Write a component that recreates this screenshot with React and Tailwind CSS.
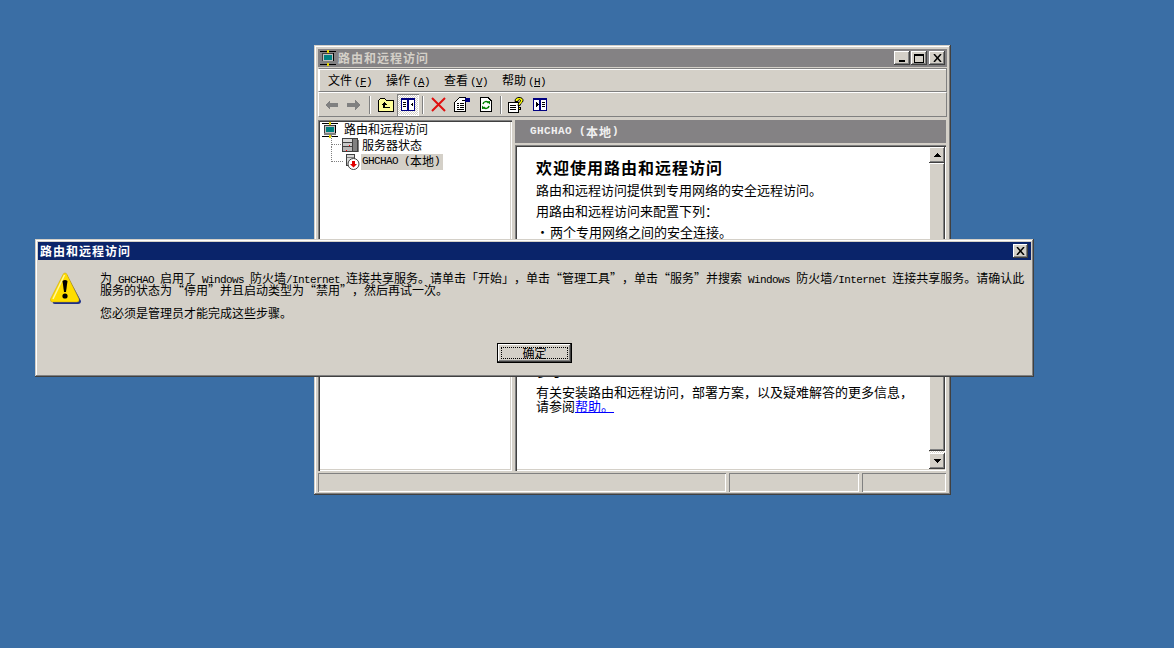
const cjk =
  "font-['Noto_Sans_CJK_SC','Liberation_Sans',sans-serif] [text-spacing-trim:space-all]";
const raised =
  "shadow-[inset_-1px_-1px_0_#404040,inset_1px_1px_0_#d4d0c8,inset_-2px_-2px_0_#808080,inset_2px_2px_0_#ffffff]";
const buttonRaised =
  "shadow-[inset_-1px_-1px_0_#404040,inset_1px_1px_0_#ffffff,inset_-2px_-2px_0_#808080]";
const sunken =
  "shadow-[inset_1px_1px_0_#808080,inset_2px_2px_0_#404040,inset_-1px_-1px_0_#ffffff,inset_-2px_-2px_0_#d4d0c8]";
const statusCell = "shadow-[inset_1px_1px_0_#808080,inset_-1px_-1px_0_#ffffff]";

// latin text in the bitmap font is 6px per glyph
const Latin = ({ children, className = "" }) => (
  <span className={`font-['Liberation_Mono',monospace] text-[11px] tracking-[-0.6px] whitespace-pre ${className}`}>
    {children}
  </span>
);

const NetworkIcon = () => (
  <svg width="16" height="16" viewBox="0 0 16 16" shapeRendering="crispEdges" className="shrink-0">
    <rect x="0" y="1" width="16" height="1" fill="#000" />
    <rect x="7" y="0" width="2" height="3" fill="#e8d800" />
    <rect x="3" y="3" width="10" height="8" fill="#c0c0c0" />
    <rect x="3" y="3" width="10" height="1" fill="#404040" />
    <rect x="2" y="3" width="1" height="8" fill="#404040" />
    <rect x="13" y="3" width="1" height="8" fill="#000" />
    <rect x="4" y="5" width="8" height="5" fill="#008080" />
    <rect x="2" y="11" width="12" height="2" fill="#808080" />
    <rect x="0" y="14" width="16" height="1" fill="#000" />
    <rect x="7" y="13" width="2" height="3" fill="#e8d800" />
  </svg>
);

const ServerIcon = () => (
  <svg width="17" height="16" viewBox="0 0 17 16" shapeRendering="crispEdges" className="shrink-0">
    <rect x="0.500" y="1.500" width="15" height="4" fill="#d8d8d8" stroke="#404040" />
    <rect x="0.500" y="5.500" width="15" height="4" fill="#c8c8c8" stroke="#404040" />
    <rect x="0.500" y="9.500" width="15" height="5" fill="#b8b8b8" stroke="#404040" />
    <rect x="10" y="2" width="5" height="12" fill="#808080" />
    <rect x="10" y="1" width="1" height="14" fill="#404040" />
    <rect x="16" y="3" width="1" height="12" fill="#808080" />
    <rect x="4" y="13" width="1" height="1" fill="#ff0000" />
    <rect x="7" y="8" width="1" height="1" fill="#ff0000" />
  </svg>
);

const StoppedServerIcon = () => (
  <svg width="15" height="16" viewBox="0 0 15 16" className="shrink-0">
    <rect x="1.500" y="0.500" width="8" height="11" fill="#d8d8d8" stroke="#404040" shapeRendering="crispEdges" />
    <rect x="2" y="3" width="7" height="1" fill="#808080" shapeRendering="crispEdges" />
    <circle cx="8.500" cy="10" r="5.500" fill="#ffffff" stroke="#404040" />
    <path d="M7 7h3v3h2l-3.500 3.500-3.500-3.500h2z" fill="#e00000" />
  </svg>
);

const UpFolderIcon = () => (
  <svg width="16" height="14" viewBox="0 0 16 14" shapeRendering="crispEdges">
    <path d="M0.500 13.500V2.500L2.500 0.500H6.500L8.500 2.500H15.500V13.500Z" fill="#ffff99" stroke="#000" />
    <path d="M6 4L3 7H5V10H12V8.500H7V7H9Z" fill="#000" />
  </svg>
);

const PanelIcon = ({ flip }) => (
  <svg width="14" height="13" viewBox="0 0 14 13" shapeRendering="crispEdges">
    <rect x="0.500" y="0.500" width="13" height="12" fill="#fff" stroke="#000080" />
    <rect x="0" y="0" width="14" height="2" fill="#000080" />
    <rect x="6" y="0" width="2" height="13" fill="#000080" />
    {flip ? (
      <path d="M3 4V9L5.500 6.500Z M9 4H12V5H9Z M9 6H12V7H9Z M9 8H12V9H9Z" fill="#000" />
    ) : (
      <path d="M2 4H5V5H2Z M2 6H5V7H2Z M2 8H5V9H2Z M12 4L9.500 6.500L12 9Z" fill="#000" />
    )}
  </svg>
);

const ArrowIcon = ({ left }) => (
  <svg width="14" height="12" viewBox="0 0 14 12" shapeRendering="crispEdges">
    <path d={left ? "M6 1V4H14V8H6V11L1 6Z" : "M8 1V4H0V8H8V11L13 6Z"} fill="#808080" />
  </svg>
);

const DeleteIcon = () => (
  <svg width="15" height="15" viewBox="0 0 15 15">
    <path d="M1 1L14 14M14 1L1 14" stroke="#e01010" strokeWidth="2" fill="none" />
  </svg>
);

const PropertiesIcon = () => (
  <svg width="17" height="15" viewBox="0 0 17 15" shapeRendering="crispEdges">
    <path d="M0.500 5.500L5.500 0.500H11.500V14.500H0.500Z" fill="#fff" stroke="#000" />
    <path d="M3 6H5V7H3ZM6 6H10V7H6ZM3 8H5V9H3ZM6 8H10V9H6ZM3 10H5V11H3ZM6 10H10V11H6ZM3 12H10V13H3Z" fill="#000" />
    <rect x="11" y="1" width="5" height="4" fill="#000080" />
    <rect x="8" y="3" width="3" height="1" fill="#000" />
  </svg>
);

const RefreshIcon = () => (
  <svg width="12" height="15" viewBox="0 0 12 15">
    <path d="M0.500 0.500H8L11.500 4V14.500H0.500Z" fill="#fff" stroke="#000" shapeRendering="crispEdges" />
    <path d="M3 7A3 3 0 0 1 8.500 6M9 9A3 3 0 0 1 3.500 10" stroke="#008000" strokeWidth="1.500" fill="none" />
    <path d="M7 4.500L10 4V7.500Z M5 11.500L2 12V8.500Z" fill="#008000" />
  </svg>
);

const HelpIcon = () => (
  <svg width="16" height="16" viewBox="0 0 16 16" shapeRendering="crispEdges">
    <path d="M0.500 5.500H10.500V15.500H0.500Z" fill="#fff" stroke="#000" />
    <path d="M2 8H8V9H2ZM2 10H8V11H2ZM2 12H8V13H2Z" fill="#000" />
    <path
      d="M7 4.500C7 1.500 9 0.500 11 0.500C14 0.500 15 2 15 3.500C15 6 12 6 12 8.500H10C10 5.500 12.500 5 12.500 3.500C12.500 2.500 11 2.500 10.500 3C10 3.500 10 4 10 4.500Z"
      fill="#ffff00"
      stroke="#000"
      shapeRendering="auto"
    />
    <rect x="10" y="10" width="2.500" height="2.500" fill="#ffff00" stroke="#000" />
  </svg>
);

const WarningIcon = () => (
  <svg width="32" height="32" viewBox="0 0 32 32">
    <path d="M17 3L31 29Q31 32 28 32H5Q2 32 3 29Z" fill="#1c2f8a" />
    <path d="M15 1Q16.500 1 17 2.500L29 27Q29.500 30 27 30H2.500Q0 30 0.500 27L13 2.500Q13.500 1 15 1Z" fill="#ffdd00" stroke="#c8a000" strokeWidth="0.500" />
    <path d="M14.500 3L3 27" stroke="#fff6a0" strokeWidth="1.500" />
    <path d="M12.500 9Q15 7 17.500 9L16 20H14Z" fill="#000" />
    <circle cx="15" cy="24" r="2.600" fill="#000" />
  </svg>
);

const CaptionButton = ({ children }) => (
  <div className={`w-4 h-3.5 bg-[#d4d0c8] flex items-center justify-center ${buttonRaised}`}>
    {children}
  </div>
);

const CloseGlyph = () => (
  <svg width="9" height="8" viewBox="0 0 9 8">
    <path d="M1 0L8 8M8 0L1 8" stroke="#000" strokeWidth="1.500" />
  </svg>
);

const ToolButton = ({ children, className = "w-[23px]" }) => (
  <div className={`h-[22px] flex items-center justify-center ${className}`}>{children}</div>
);

const Separator = ({ className = "" }) => (
  <div className={`w-0.5 h-[18px] border-l border-[#808080] bg-white ${className}`} />
);

const MenuItem = ({ label, mnemonic }) => (
  <div className="w-[58px] shrink-0 whitespace-nowrap">
    {label}
    <Latin className="ml-0.5">(<span className="underline">{mnemonic}</span>)</Latin>
  </div>
);

const ScrollButton = ({ up }) => (
  <div className={`h-4 bg-[#d4d0c8] flex items-center justify-center ${buttonRaised}`}>
    <svg width="7" height="4" viewBox="0 0 7 4" shapeRendering="crispEdges">
      <path d={up ? "M3 0H4V1H5V2H6V3H7V4H0V3H1V2H2V1H3Z" : "M0 0H7V1H6V2H5V3H4V4H3V3H2V2H1V1H0Z"} fill="#000" />
    </svg>
  </div>
);

const RoutingWindow = () => (
  <div className={`absolute left-[314px] top-[45px] w-[637px] h-[450px] bg-[#d4d0c8] p-[3px] flex flex-col ${raised} ${cjk} text-xs text-black`}>
    {/* title bar */}
    <div className="h-[18px] mt-px mx-px bg-[#848284] flex items-center pl-[2px] pr-[2px] shrink-0">
      <NetworkIcon />
      <div className="flex-1 ml-0.5 font-bold tracking-[1px] text-[#d4d0c8] leading-none">路由和远程访问</div>
      <CaptionButton>
        <div className="w-1.5 h-0.5 bg-black mt-1.5" />
      </CaptionButton>
      <div className="ml-px mr-0.5">
        <CaptionButton>
          <div className="w-2.5 h-[9px] border border-black border-t-2" />
        </CaptionButton>
      </div>
      <CaptionButton>
        <CloseGlyph />
      </CaptionButton>
    </div>

    {/* menu */}
    <div className="h-6 mt-px mx-px flex items-center pt-0.5 pl-[9px] border border-t-[#808080] border-l-[#ffffff] border-b-[#808080] border-r-[#808080] shadow-[inset_1px_1px_0_#ffffff] shrink-0">
      <MenuItem label="文件" mnemonic="F" />
      <MenuItem label="操作" mnemonic="A" />
      <MenuItem label="查看" mnemonic="V" />
      <MenuItem label="帮助" mnemonic="H" />
    </div>

    {/* toolbar */}
    <div className="h-[25px] mx-px flex items-center pl-px border border-t-white border-l-white border-b-[#808080] border-r-[#808080] shrink-0">
      <ToolButton className="w-[22px]"><ArrowIcon left /></ToolButton>
      <ToolButton className="w-[23px]"><ArrowIcon /></ToolButton>
      <Separator className="ml-[4px] mr-[4px]" />
      <ToolButton className="w-[22px]"><UpFolderIcon /></ToolButton>
      <div className="w-[22px] h-[22px] flex items-center justify-center bg-[repeating-conic-gradient(#ffffff_0_25%,#d4d0c8_0_50%)] bg-[length:2px_2px] shadow-[inset_1px_1px_0_#808080,inset_-1px_-1px_0_#ffffff]">
        <PanelIcon />
      </div>
      <Separator className="ml-[3px] mr-[3px]" />
      <ToolButton className="w-[23px]"><DeleteIcon /></ToolButton>
      <ToolButton className="w-[24px]"><PropertiesIcon /></ToolButton>
      <ToolButton className="w-[23px]"><RefreshIcon /></ToolButton>
      <Separator className="ml-[3px] mr-[2px]" />
      <ToolButton className="w-[24px]"><HelpIcon /></ToolButton>
      <ToolButton className="w-[24px]"><PanelIcon flip /></ToolButton>
    </div>

    {/* panes */}
    <div className="flex-1 min-h-0 flex mt-[3px] ml-px mr-0.5 gap-[3px]">
      {/* tree */}
      <div className={`w-[194px] bg-white p-0.5 pl-[3px] overflow-hidden ${sunken}`}>
        <div className="h-[15px] flex items-center gap-1.5 pl-px">
          <NetworkIcon />
          <span className="leading-none pb-0.5">路由和远程访问</span>
        </div>
        <div className="h-4 flex items-center relative pl-[21px]">
          <div className="absolute left-[10px] -top-[2px] h-[10px] w-[10px] border-l border-b border-dotted border-[#808080]" />
          <ServerIcon />
          <span className="leading-none ml-[3px]">服务器状态</span>
        </div>
        <div className="h-4 mt-px flex items-center relative pl-[24px]">
          <div className="absolute left-[10px] -top-[8px] h-[16px] w-[12px] border-l border-b border-dotted border-[#808080]" />
          <StoppedServerIcon />
          <span className="bg-[#d4d0c8] h-4 flex items-center w-[82px] ml-[1px] pl-px pb-0.5 leading-none whitespace-nowrap">
            <Latin>GHCHAO (</Latin>本地<Latin>)</Latin>
          </span>
        </div>
      </div>

      {/* detail */}
      <div className="flex-1 min-w-0 flex flex-col gap-0.5">
        <div className="h-[23px] bg-[#848284] flex items-center pl-[15px] text-[#f0f0f0] font-bold leading-none whitespace-pre shrink-0">
          <Latin className="tracking-[0.4px]">GHCHAO (</Latin>
          <span className="tracking-[1px]">本地</span>
          <Latin>)</Latin>
        </div>
        <div className={`flex-1 min-h-0 bg-white flex p-0.5 pr-px ${sunken}`}>
          <div className="flex-1 min-w-0 pl-[19px] pt-[10px] overflow-hidden text-[13px]">
            <h1 className="text-base leading-[20px] font-bold tracking-[1px]">欢迎使用路由和远程访问</h1>
            <p className="leading-[14px] mt-[6px]">路由和远程访问提供到专用网络的安全远程访问。</p>
            <p className="leading-[14px] mt-[7px]">用路由和远程访问来配置下列：</p>
            <p className="leading-[14px] mt-[7px] flex">
              <span className="w-3.5">•</span>两个专用网络之间的安全连接。
            </p>
            <p className="font-bold leading-[14px] mt-[125px]">参考：</p>
            <p className="leading-[14px] mt-[7px]">有关安装路由和远程访问，部署方案，以及疑难解答的更多信息，</p>
            <p className="leading-[14px]">
              请参阅<span className="text-[#0000ff] underline">帮助。</span>
            </p>
          </div>
          <div className="w-4 shrink-0 flex flex-col">
            <ScrollButton up />
            <div className={`flex-1 bg-[#d4d0c8] ${buttonRaised}`} />
            <div className="h-0.5 bg-[repeating-conic-gradient(#ffffff_0_25%,#d4d0c8_0_50%)] bg-[length:2px_2px]" />
            <ScrollButton />
          </div>
        </div>
      </div>
    </div>

    {/* status bar */}
    <div className="h-[19px] mt-0.5 ml-px mr-0.5 flex gap-[3px] shrink-0">
      <div className={`w-[408px] ${statusCell}`} />
      <div className={`w-[130px] ${statusCell}`} />
      <div className={`flex-1 ${statusCell}`} />
    </div>
  </div>
);

const AlertDialog = () => (
  <div className={`absolute left-[35px] top-[239px] w-[999px] h-[138px] bg-[#d4d0c8] p-[3px] flex flex-col ${raised} ${cjk} text-xs text-black`}>
    <div className="h-[18px] bg-[#0a246a] flex items-center justify-between pl-0.5 pr-[3px] shrink-0">
      <span className="text-white font-bold tracking-[1px] leading-none">路由和远程访问</span>
      <div className={`w-[15px] h-[14px] bg-[#d4d0c8] flex items-center justify-center ${buttonRaised}`}>
        <CloseGlyph />
      </div>
    </div>
    <div className="flex-1 flex flex-col">
      <div className="flex pt-[12px] pl-[12px]">
        <div className="w-[50px] shrink-0">
          <WarningIcon />
        </div>
        <div className="whitespace-nowrap">
          <div className="h-3 leading-3">
            为<Latin>{" GHCHAO "}</Latin>启用了<Latin>{" Windows "}</Latin>防火墙<Latin>{"/Internet "}</Latin>连接共享服务。请单击「开始」，单击“管理工具”，单击“服务”并搜索<Latin>{" Windows "}</Latin>防火墙<Latin>{"/Internet "}</Latin>连接共享服务。请确认此
          </div>
          <div className="h-3 leading-3">服务的状态为“停用”并且启动类型为“禁用”，然后再试一次。</div>
          <div className="h-3 leading-3 mt-[11px]">您必须是管理员才能完成这些步骤。</div>
        </div>
      </div>
      <div className="flex-1 flex justify-center items-start pt-[24px]">
        <div className="w-[75px] h-5 border border-black bg-[#d4d0c8] p-[3px] shadow-[inset_-1px_-1px_0_#404040,inset_1px_1px_0_#ffffff,inset_-2px_-2px_0_#808080]">
          <div className="h-full border border-dotted border-black flex items-center justify-center leading-none">
            确定
          </div>
        </div>
      </div>
    </div>
  </div>
);

export default function App() {
  return (
    <div className="relative w-[1174px] h-[648px] overflow-hidden bg-[#3a6ea5]">
      <RoutingWindow />
      <AlertDialog />
    </div>
  );
}
